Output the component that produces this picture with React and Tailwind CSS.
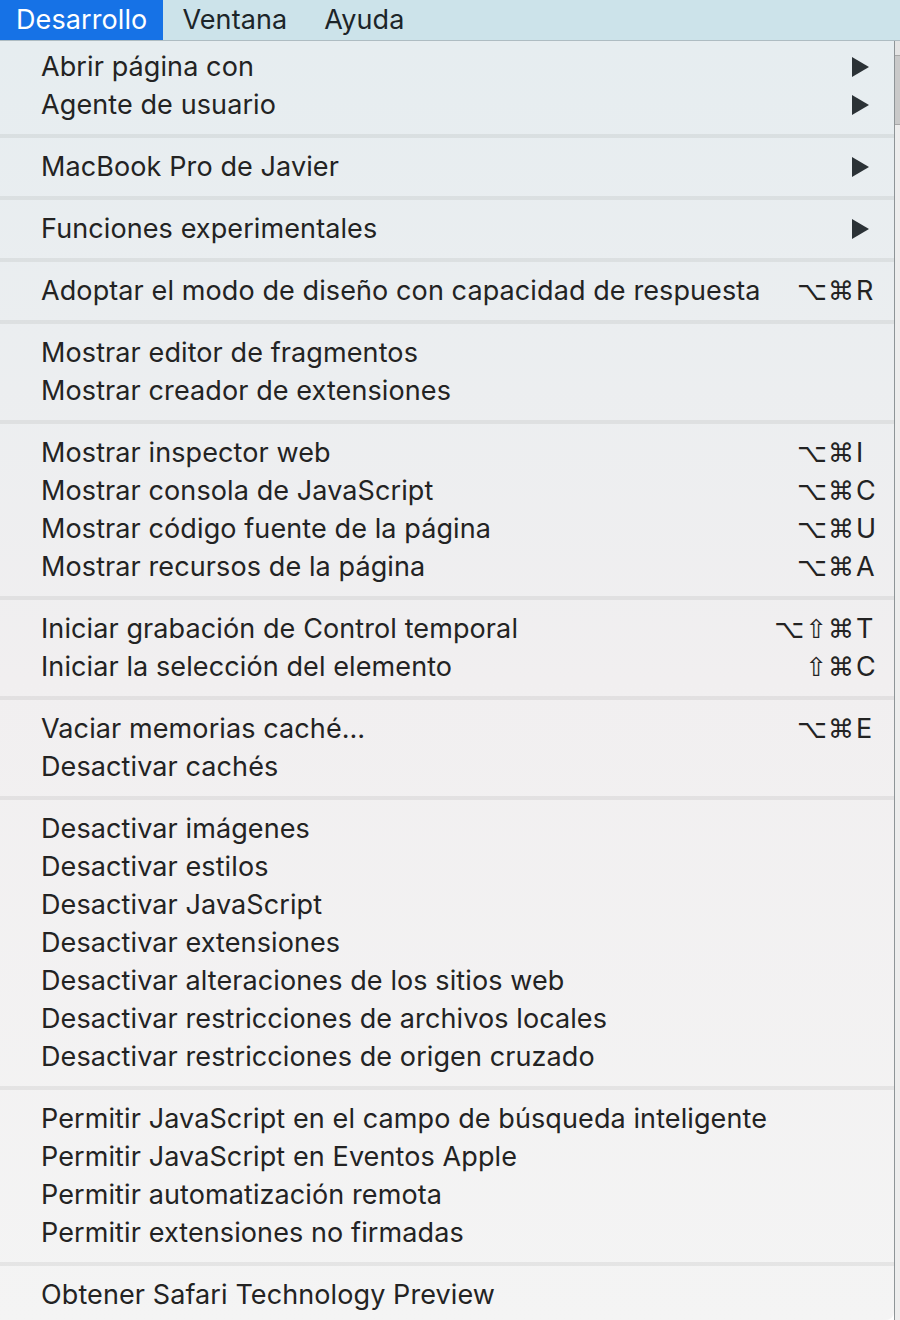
import React from "react";

const groups = [
  [
    { label: "Abrir página con", submenu: true },
    { label: "Agente de usuario", submenu: true },
  ],
  [{ label: "MacBook Pro de Javier", submenu: true }],
  [{ label: "Funciones experimentales", submenu: true }],
  [{ label: "Adoptar el modo de diseño con capacidad de respuesta", mods: "⌥⌘", key: "R" }],
  [{ label: "Mostrar editor de fragmentos" }, { label: "Mostrar creador de extensiones" }],
  [
    { label: "Mostrar inspector web", mods: "⌥⌘", key: "I" },
    { label: "Mostrar consola de JavaScript", mods: "⌥⌘", key: "C" },
    { label: "Mostrar código fuente de la página", mods: "⌥⌘", key: "U" },
    { label: "Mostrar recursos de la página", mods: "⌥⌘", key: "A" },
  ],
  [
    { label: "Iniciar grabación de Control temporal", mods: "⌥⇧⌘", key: "T" },
    { label: "Iniciar la selección del elemento", mods: "⇧⌘", key: "C" },
  ],
  [{ label: "Vaciar memorias caché…", mods: "⌥⌘", key: "E" }, { label: "Desactivar cachés" }],
  [
    { label: "Desactivar imágenes" },
    { label: "Desactivar estilos" },
    { label: "Desactivar JavaScript" },
    { label: "Desactivar extensiones" },
    { label: "Desactivar alteraciones de los sitios web" },
    { label: "Desactivar restricciones de archivos locales" },
    { label: "Desactivar restricciones de origen cruzado" },
  ],
  [
    { label: "Permitir JavaScript en el campo de búsqueda inteligente" },
    { label: "Permitir JavaScript en Eventos Apple" },
    { label: "Permitir automatización remota" },
    { label: "Permitir extensiones no firmadas" },
  ],
  [{ label: "Obtener Safari Technology Preview" }],
];

function Item({ item }) {
  return (
    <div className="h-[38px] flex items-center pl-[41px] pr-[18px]">
      <span className="flex-1 whitespace-nowrap">{item.label}</span>
      {item.submenu && (
        <svg width="17" height="20" viewBox="0 0 17 20" className="mr-[7px]">
          <polygon points="0,0 17,10 0,20" fill="#2b3236" />
        </svg>
      )}
      {item.key && (
        <span className="flex items-center">
          <span className="text-right tracking-[1px] font-['DejaVu_Sans',sans-serif] text-[26px] leading-none">
            {item.mods}
          </span>
          <span className="w-[21px] pl-[1px]">{item.key}</span>
        </span>
      )}
    </div>
  );
}

export default function App() {
  return (
    <div className="w-[900px] h-[1320px] overflow-hidden flex flex-col font-['Inter',sans-serif] text-[27px] tracking-[0.1px] text-[#232323]">
      {/* Menu bar */}
      <div className="h-[41px] shrink-0 flex bg-[#cce3ea] border-b border-[#aebcc2] text-[#1c2529]">
        <div className="bg-[#1672e6] text-white px-[16px] pt-[1px] flex items-center">Desarrollo</div>
        <div className="px-[19px] pt-[1px] flex items-center">Ventana</div>
        <div className="px-[18px] pt-[1px] flex items-center">Ayuda</div>
      </div>

      <div className="flex flex-1">
        {/* Menu */}
        <div className="w-[894px] pt-[7px] bg-gradient-to-b from-[#e6edf0] via-[#f1eff0] to-[#f4f4f4] rounded-br-[8px]">
          {groups.map((g, gi) => (
            <div key={gi}>
              {gi > 0 && (
                <div className="py-[10px]">
                  <div className="h-[4px] bg-black/[0.06]" />
                </div>
              )}
              {g.map((item, i) => (
                <Item key={i} item={item} />
              ))}
            </div>
          ))}
        </div>
        {/* window behind */}
        <div className="flex-1 border-l border-[#8e9497] bg-[#ececec] flex flex-col">
          <div className="h-[14px] bg-[#e4e4e4]" />
          <div className="h-[70px] bg-[#c9c9c9] border-y border-[#a8a8a8]" />
          <div className="flex-1 bg-[#ededed]" />
        </div>
      </div>
    </div>
  );
}
